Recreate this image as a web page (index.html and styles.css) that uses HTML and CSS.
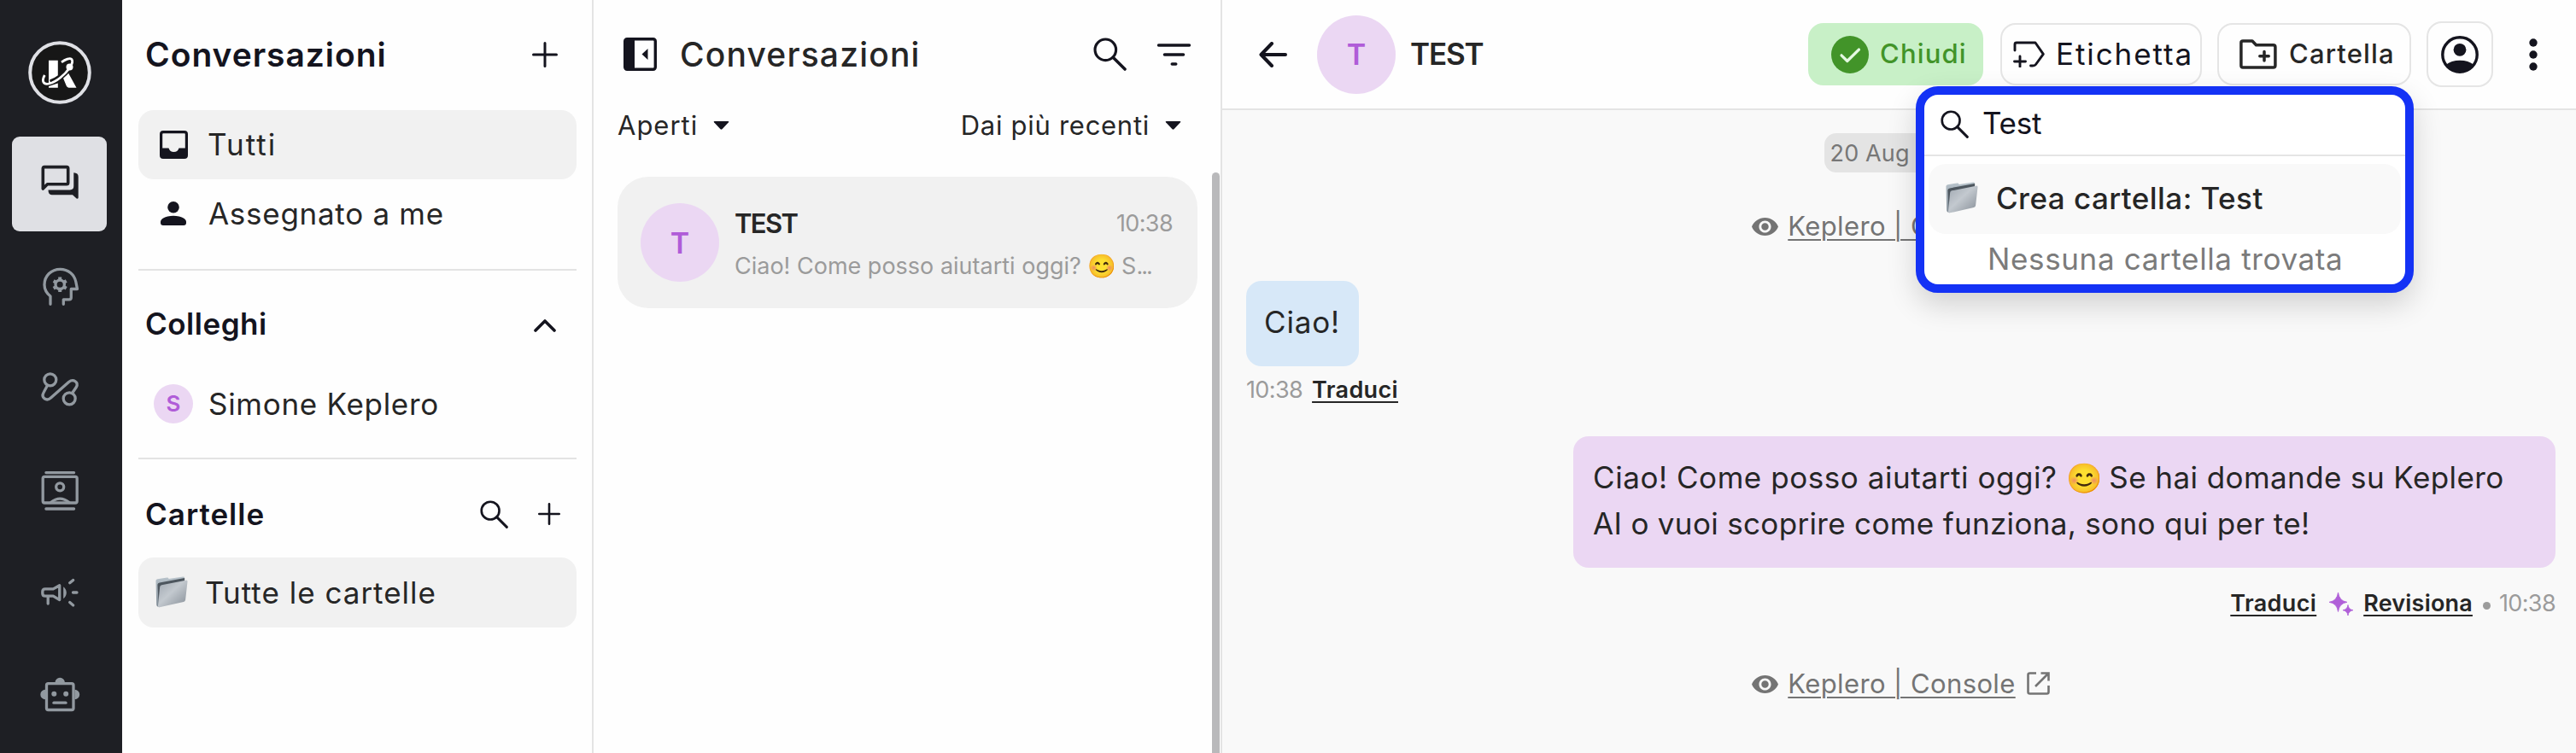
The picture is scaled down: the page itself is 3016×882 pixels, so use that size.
FILE: index.html
```html
<!DOCTYPE html>
<html lang="it">
<head>
<meta charset="utf-8">
<title>Keplero | Conversazioni</title>
<link rel="stylesheet" href="styles.css">
</head>
<body>
<svg width="0" height="0" class="defs" aria-hidden="true">
  <defs>
    <linearGradient id="front" x1="0" y1="0" x2="1" y2="1">
      <stop offset="0" stop-color="#9fa7b0"/><stop offset=".45" stop-color="#c3c9cf"/><stop offset="1" stop-color="#858d96"/>
    </linearGradient>
    <linearGradient id="back" x1="0" y1="0" x2="0" y2="1">
      <stop offset="0" stop-color="#b9c4cc"/><stop offset="1" stop-color="#7f8b95"/>
    </linearGradient>
  </defs>
  <symbol id="folder" viewBox="0 0 40 40">
    <path d="M1.500 6.500Q1.500 4.500 3.500 4.300L15 2.600Q16.500 2.500 17 4L34 1.500Q36 1.300 36 3V30L5 37.500Q2.500 38 2.300 35.500Z" fill="url(#back)"/>
    <path d="M3.500 11Q3.700 9 6 8.600L36 3V8L8 14L5 37Z" fill="#4d565e"/>
    <path d="M6.300 14Q6.500 12 8.500 11.600L37.500 5.800Q39.700 5.500 39.500 7.500L37 29.500Q36.700 31.300 34.800 31.900L6 38.300Q3.900 38.600 4.100 36.500Z" fill="url(#front)"/>
  </symbol>
  <symbol id="search" viewBox="0 0 40 40">
    <circle cx="14.700" cy="14.700" r="12.600" fill="none" stroke="currentColor" stroke-width="3.200"/>
    <path d="M23.800 23.800L38 38" stroke="currentColor" stroke-width="3.600" stroke-linecap="round"/>
  </symbol>
  <symbol id="plus" viewBox="0 0 30 30">
    <path d="M15 1.500V28.500M1.500 15H28.500" stroke="currentColor" stroke-width="3" stroke-linecap="round"/>
  </symbol>
  <symbol id="caret" viewBox="0 0 19 10"><path d="M1.500 0H17.500Q19 0 18 1.300L10.500 9.300Q9.500 10.200 8.500 9.300L1 1.300Q0 0 1.500 0Z" fill="currentColor"/></symbol>
  <symbol id="eye" viewBox="1 4 22 16"><path d="M12 4.500C7 4.500 2.700 7.600 1 12c1.700 4.400 6 7.500 11 7.500s9.300-3.100 11-7.500c-1.700-4.400-6-7.500-11-7.500zM12 17c-2.800 0-5-2.200-5-5s2.200-5 5-5 5 2.200 5 5-2.200 5-5 5zm0-8c-1.700 0-3 1.300-3 3s1.300 3 3 3 3-1.300 3-3-1.300-3-3-3z" fill="currentColor"/></symbol>
</svg>

<nav class="rail">
  <svg class="logo" viewBox="0 0 74 74">
    <circle cx="37" cy="37" r="34.800" fill="#171717" stroke="#dfe0e5" stroke-width="4"/>
    <path d="M24 22.700H34.800V42L24 51ZM24 53L34.800 49.500V54.700H24Z" fill="#fff"/>
    <path d="M41 43.500L47 37.500L56.500 54.800H47.500Q45.500 54.500 44.700 52.500Z" fill="#fff"/>
    <path d="M26 48.500C34 46 42 39.500 48 32" fill="none" stroke="#171717" stroke-width="6.500"/>
    <path d="M19.300 40C15.500 47 17.500 51.500 24.500 50C33 48 43 39.500 48.500 31.500C53.500 24 52.500 19 46 21.200Q42.500 22.300 39 24.800" fill="none" stroke="#fff" stroke-width="2.800"/>
    <circle cx="48.500" cy="30.500" r="4" fill="#fff"/>
  </svg>
  <a class="nav on"><svg viewBox="0 0 52 52">
    <path d="M8 5.600H34Q35.700 5.600 35.700 7.400V24Q35.700 25.800 34 25.800H11.500L6.300 31V7.400Q6.300 5.600 8 5.600Z" fill="none" stroke="currentColor" stroke-width="3.600" stroke-linejoin="round"/>
    <path d="M42.300 12.200Q47.700 12.500 47.700 17V41.500Q47.500 43.200 45.600 42.600L41 38.200H16.500Q12.500 38 12.500 32.400H38Q42.300 32.300 42.300 28Z" fill="currentColor"/></svg></a>
  <a class="nav"><svg viewBox="0 0 52 52" class="line">
    <path d="M15 47.300V38C10 34 8 29.500 8 24.500C8 14 16 6.300 26.500 6.300C36 6.300 43 12.500 44.800 21L46.500 29.500H39.300V39.500Q39.300 41.800 37 41.800H30.300V47.300"/>
    <circle cx="26.200" cy="24.300" r="5.200"/>
    <path stroke-width="4" stroke-linecap="butt" d="M26.200 18.500V15.600M26.200 30.100V33M21.200 21.400L18.700 20M31.200 21.400L33.700 20M21.200 27.200L18.700 28.700M31.200 27.200L33.700 28.700"/></svg></a>
  <a class="nav"><svg viewBox="0 0 52 52" class="line">
    <circle cx="14.800" cy="15.800" r="7"/><circle cx="37.200" cy="37.800" r="7"/>
    <path d="M11.500 22.500L7.200 30.500C3.500 37 10.500 41.500 15.500 37L36.500 18.500C42 14 48.500 19 45.300 24.500L40.500 31.500"/></svg></a>
  <a class="nav"><svg viewBox="0 0 52 52" class="line">
    <rect x="6.200" y="10.400" width="40" height="30.600" rx="2"/><path d="M9.900 5.600H42.600M9.900 48H42.600M15.500 40.500Q26.200 31.800 37 40.500"/><circle cx="26.200" cy="22.300" r="4.500"/></svg></a>
  <a class="nav"><svg viewBox="0 0 52 52" class="line">
    <path d="M9 21.900H18.300L25.700 17.800V34.600L18.300 30.200H9Q5.800 30.200 5.800 27V25Q5.800 21.900 9 21.900ZM12.200 31V39M37.700 14.800L41.700 11.500M41.500 26H46M37.700 37.600L41.700 40.900"/>
    <path d="M30.200 19.200Q33.800 22 33.800 26.200T30.200 33.200Z" fill="currentColor" stroke="none"/></svg></a>
  <a class="nav"><svg viewBox="0 0 52 52" class="line">
    <rect x="10.500" y="13.700" width="31.500" height="30.800" rx="2"/><path d="M19 36.200H33"/>
    <g fill="currentColor" stroke="none"><path d="M20.500 12.500A5.700 5.700 0 0 1 31.900 12.500ZM9 20.800A5.700 5.700 0 0 0 9 32.200ZM43.500 20.800A5.700 5.700 0 0 1 43.500 32.200Z"/><circle cx="19.300" cy="25.800" r="3"/><circle cx="33.200" cy="25.800" r="3"/></g></svg></a>
</nav>

<aside class="side">
  <header class="side-head">
    <h1 class="t40 semi navy ls-a">Conversazioni</h1>
    <svg class="plus-lg"><use href="#plus"/></svg>
  </header>
  <div class="row sel">
    <svg class="ico-inbox" viewBox="0 0 33 33"><rect x="1.600" y="1.600" width="29.800" height="29.800" rx="2.500" fill="none" stroke="currentColor" stroke-width="3.200"/><path d="M1.500 20.500H10.500Q12 25 16.500 25T22.500 20.500H31.500V30H1.500Z" fill="currentColor"/></svg>
    <span class="t36 ls-tutti">Tutti</span>
  </div>
  <div class="row me">
    <svg class="ico-me" viewBox="0 0 30 28"><circle cx="15" cy="6.800" r="6.800" fill="currentColor"/><path d="M0 25V24C0 19 9 16.700 15 16.700S30 19 30 24V25Q30 28 27 28H3Q0 28 0 25Z" fill="currentColor"/></svg>
    <span class="t36 ls-m">Assegnato a me</span>
  </div>
  <hr>
  <header class="sub-head first">
    <h2 class="t36 semi navy ls-s">Colleghi</h2>
    <svg class="chev" viewBox="0 0 26 15"><path d="M2 13L13 2L24 13" fill="none" stroke="currentColor" stroke-width="3.600" stroke-linecap="round" stroke-linejoin="round"/></svg>
  </header>
  <div class="row mate">
    <span class="avatar xs">S</span><span class="t36 ls-m">Simone Keplero</span>
  </div>
  <hr>
  <header class="sub-head second">
    <h2 class="t36 semi navy ls-l">Cartelle</h2>
    <span class="tools"><svg class="search-sm"><use href="#search"/></svg><svg class="plus-sm"><use href="#plus"/></svg></span>
  </header>
  <div class="row sel all">
    <svg class="folder"><use href="#folder"/></svg><span class="t36 ls-l">Tutte le cartelle</span>
  </div>
</aside>

<section class="list">
  <header class="list-head">
    <svg class="collapse" viewBox="0 0 39 39"><rect x="1.700" y="1.700" width="35.600" height="35.600" rx="2.500" fill="none" stroke="currentColor" stroke-width="3.400"/><path d="M1 2H13V37H1ZM28.500 13V26L21.500 19.500Z" fill="currentColor"/></svg>
    <h1 class="t40 med ls-b">Conversazioni</h1>
    <svg class="search-lg"><use href="#search"/></svg>
    <svg class="filter" viewBox="0 0 39 26"><path d="M1.700 2H37.300M8.500 13H30.500M17.300 24H21.700" stroke="currentColor" stroke-width="3.600" stroke-linecap="round"/></svg>
  </header>
  <div class="filters">
    <span class="drop"><span class="t32 ls-aperti">Aperti</span><svg class="caret"><use href="#caret"/></svg></span>
    <span class="drop"><span class="t32 ls-m">Dai più recenti</span><svg class="caret"><use href="#caret"/></svg></span>
  </div>
  <article class="card">
    <span class="avatar">T</span>
    <div class="card-body">
      <div class="card-top"><strong class="t32 semi ls-test">TEST</strong><time class="t28 faint ls-time">10:38</time></div>
      <p class="t28 faint preview">Ciao! Come posso aiutarti oggi? <span class="emoji em-s">😊</span> S<span class="dots3">...</span></p>
    </div>
  </article>
  <div class="scrollbar"></div>
</section>

<main class="chat">
  <header class="bar">
    <svg class="back" viewBox="0 0 33 30"><path d="M15 2L2.500 15L15 28M3 15H31" fill="none" stroke="currentColor" stroke-width="4" stroke-linecap="round" stroke-linejoin="round"/></svg>
    <span class="avatar">T</span>
    <h2 class="t36 semi ls-test2">TEST</h2>
    <button class="btn close"><svg viewBox="0 0 44 44"><circle cx="22" cy="22" r="22" fill="#429429"/><path d="M12 22.800L18.800 29.500L32.500 16" fill="none" stroke="#e4f8e2" stroke-width="3.200" stroke-linecap="round" stroke-linejoin="round"/></svg><span class="t32 btxt">Chiudi</span></button>
    <button class="btn tag"><svg viewBox="0 0 37 31"><path d="M2 11V4Q2 2 4 2H26L35.300 15.300L26.500 27.500Q25.500 29 23 29H20.500M8 18V30M1.500 24H14.500" fill="none" stroke="currentColor" stroke-width="2.900" stroke-linecap="round" stroke-linejoin="round"/></svg><span class="t36 navy ls-etichetta">Etichetta</span></button>
    <button class="btn dir"><svg viewBox="0 0 44 35"><path d="M4 2H15L19.500 6.700H39.500Q41.900 6.700 41.900 9V30.700Q41.900 33 39.500 33H4Q1.900 33 1.900 30.700V4Q1.900 2 4 2ZM29 14.500V25M23.800 19.800H34.200" fill="none" stroke="currentColor" stroke-width="3.500" stroke-linecap="round" stroke-linejoin="round"/></svg><span class="t32 btxt">Cartella</span></button>
    <button class="btn user"><svg viewBox="0 0 44 44"><circle cx="22" cy="22" r="20.200" fill="none" stroke="currentColor" stroke-width="3.400"/><circle cx="22" cy="16.300" r="7.400" fill="currentColor"/><path d="M5.500 34Q12 28.800 22 28.800T38.500 34Q33 42 22 42T5.500 34Z" fill="currentColor"/></svg></button>
    <svg class="more" viewBox="0 0 10 38"><circle cx="5" cy="5" r="4.700"/><circle cx="5" cy="19" r="4.700"/><circle cx="5" cy="33" r="4.700"/></svg>
  </header>

  <div class="thread">
    <div class="date t28">20 Aug 2025</div>
    <div class="visit top"><svg class="eye"><use href="#eye"/></svg><a class="t32 ls-k">Keplero | Console</a><svg class="ext" viewBox="0 0 27 27"><path d="M11 1.500H3.500Q1.500 1.500 1.500 3.500V23.500Q1.500 25.500 3.500 25.500H23.500Q25.500 25.500 25.500 23.500V16M16.500 1.500H25.500V10.500M25 2L10 17" fill="none" stroke="currentColor" stroke-width="2.600"/></svg></div>
    <div class="bubble in t36 ls-ciao">Ciao!</div>
    <div class="meta left"><time class="t28 faint ls-time">10:38</time><a class="t28 semi ls-tr">Traduci</a></div>
    <div class="bubble out t36"><span class="ls-o1">Ciao! Come posso aiutarti oggi? <span class="emoji em-l">😊</span> </span><span class="ls-o2">Se hai domande su Keplero</span><br><span class="ls-o3">AI o vuoi scoprire come funziona, sono qui per te!</span></div>
    <div class="meta right"><a class="t28 semi ls-tr">Traduci</a>
      <svg class="spark" viewBox="0 0 28 27"><path d="M10.500 0Q11.800 10 21 11.300Q11.800 12.600 10.500 22.500Q9.200 12.600 0 11.300Q9.200 10 10.500 0ZM22 14.500Q22.700 20 28 20.700Q22.700 21.500 22 27Q21.300 21.500 16 20.700Q21.300 20 22 14.500Z" fill="#b060d8" stroke="#b060d8" stroke-width=".8"/></svg>
      <a class="t28 semi ls-rev">Revisiona</a><i class="dot"></i><time class="t28 faint ls-time">10:38</time></div>
    <div class="visit"><svg class="eye"><use href="#eye"/></svg><a class="t32 ls-k">Keplero | Console</a><svg class="ext" viewBox="0 0 27 27"><path d="M11 1.500H3.500Q1.500 1.500 1.500 3.500V23.500Q1.500 25.500 3.500 25.500H23.500Q25.500 25.500 25.500 23.500V16M16.500 1.500H25.500V10.500M25 2L10 17" fill="none" stroke="currentColor" stroke-width="2.600"/></svg></div>
  </div>

  <div class="popup">
    <div class="field"><svg class="search-sm"><use href="#search"/></svg><span class="t36 navy ls-q">Test</span></div>
    <div class="option"><svg class="folder"><use href="#folder"/></svg><span class="t36 ls-crea">Crea cartella: Test</span></div>
    <p class="t36 none">Nessuna cartella trovata</p>
  </div>
</main>
</body>
</html>
```
FILE: styles.css
```css
*{box-sizing:border-box}
body{margin:0;width:3016px;height:882px;overflow:hidden;display:flex;background:#fefefe;color:#262626;font-family:Inter,"Noto Color Emoji",sans-serif}
h1,h2,p{margin:0;font-weight:400}
svg{display:block;flex:none;color:#14141e}
.defs{position:absolute}

/* type */
.t40{font-size:39px;line-height:48px}
.t36{font-size:35px;line-height:44px}
.t32{font-size:31px;line-height:40px}
.t28{font-size:27px;line-height:36px}
.semi{font-weight:600}
.med{font-weight:500}
.navy{color:#14141e}
.faint{color:#9b9b9b}
.ls-a{letter-spacing:.95px}
.ls-b{letter-spacing:1.17px}
.ls-tutti{letter-spacing:2px}
.ls-m{letter-spacing:.72px}
.ls-s{letter-spacing:.51px}
.ls-l{letter-spacing:1px}
.btxt{font-weight:550;letter-spacing:1.15px}
.ls-aperti{letter-spacing:1px}
.ls-test{letter-spacing:-1.6px}
.ls-test2{letter-spacing:-1.19px}
.ls-time{letter-spacing:-.62px}
.ls-etichetta{letter-spacing:1.9px}
.ls-k{letter-spacing:.39px}
.ls-ciao{letter-spacing:.83px}
.ls-tr{letter-spacing:.35px}
.ls-rev{letter-spacing:.19px}
.ls-q{letter-spacing:-.25px}
.ls-crea{font-weight:470;letter-spacing:.45px}
.ls-o1{letter-spacing:.56px}
.ls-o2{letter-spacing:.42px}
.ls-o3{letter-spacing:.33px}

/* rail */
.rail{flex:none;width:143px;background:#1e1f24;display:flex;flex-direction:column;padding:48px 0 0 14px;gap:8.5px;color:#9299a0}
.logo{width:74px;height:74px;margin:0 0 29.500px 19px}
.nav{width:111px;height:111px;flex:none;border-radius:9px;display:flex;align-items:center;justify-content:center;color:#9299a0}
.nav svg{width:52px;height:52px;color:inherit}
.nav.on{background:#dfe0e4;color:#1e1f24}
.line{fill:none;stroke:currentColor;stroke-width:3.300;stroke-linecap:round;stroke-linejoin:round}

/* folders column */
.side{flex:none;width:552px;border-right:2px solid #e4e4e4;padding:0 18px 0 19px}
.side-head{height:129px;padding:0 22px 2px 8px;display:flex;align-items:center;justify-content:space-between}
.plus-lg{width:30px;height:30px}
.row{height:82px;border-radius:18px;display:flex;align-items:center;padding-left:25px}
.sel{background:#f1f1f1}
.side .row{width:513px}
.ico-inbox{width:33px;height:33px;margin-right:23px}
.side-head + .row{height:81px;padding-bottom:1px}
.me{padding:0 0 2px 26px}
.ico-me{width:30px;height:28px;margin-right:26px}
hr{width:513px;height:2px;border:0;margin:0;background:#e3e3e3}
.me + hr{margin-top:23px}
.sub-head{display:flex;align-items:center;justify-content:space-between;padding:0 24px 0 8px}
.first{height:124px}
.chev{width:26px;height:15px;margin-top:4px}
.mate{height:64px;padding:0 0 1px 18px}
.xs.avatar{width:46px;height:46px;font-size:26px;font-weight:600;margin-right:18px}
.mate + hr{margin-top:31px}
.second{height:115px;padding:13px 19px 0 8px}
.tools{display:flex;align-items:center;gap:35px}
.search-sm{width:33px;height:33px}
.plus-sm{width:26px;height:26px}
.folder{width:39px;height:39px}
.all{padding:0 0 1px 19px}
.all .folder{margin-right:20px}

.avatar{flex:none;width:92px;height:92px;border-radius:50%;background:#ebd7f3;color:#b05cd8;display:flex;align-items:center;justify-content:center;font-size:34px;font-weight:600}

/* conversation list */
.list{flex:none;width:736px;border-right:2px solid #e4e4e4;position:relative;padding:0 0 0 28px}
.list-head{display:flex;align-items:center;height:127px;padding-left:7px}
.collapse{width:39px;height:39px}
.list-head h1{margin-left:27px;width:484px}
.search-lg{width:39px;height:39px;margin-right:36px}
.filter{width:39px;height:26px}
.filters{display:flex;justify-content:space-between;height:80px;padding:0 46px 0 0}
.drop{display:flex;height:40px;align-items:center;gap:18px}
.caret{width:19px;height:10px}
.card{width:679px;height:154px;border-radius:36px;background:#f1f1f1;display:flex;align-items:center;padding:0 29px 0 27px}
.card .avatar{margin-right:18px}
.card-body{flex:1;padding-top:8px}
.card-top{display:flex;justify-content:space-between;align-items:center;height:40px}
.preview{margin-top:8px;height:44px;line-height:44px;white-space:nowrap}
.dots3{letter-spacing:-2px}
.emoji{display:inline-block;letter-spacing:0;line-height:1;vertical-align:baseline}
.em-s{font-size:27px;width:32px}
.em-l{font-size:34px;width:40px}
.scrollbar{position:absolute;right:1px;top:202px;width:9px;height:690px;border-radius:5px;background:#b9b9bb}

/* chat */
.chat{flex:1;position:relative;background:#f9f9f9;display:flex;flex-direction:column}
.bar{height:129px;border-bottom:2px solid #e4e4e4;background:#fefefe;display:flex;align-items:center;padding-left:43px}
.bar h2,.btn span{position:relative;top:-1px}
.back{width:33px;height:30px}
.bar .avatar{margin-left:35px}
.bar h2{margin-left:17px;width:466px}
.btn{flex:none;height:73px;border:2px solid #e5e5e5;border-radius:18px;background:#fefefe;font-family:inherit;color:#262626;display:flex;align-items:center;padding:0}
.btn span{white-space:nowrap}
.close{width:205px;background:#c8f0c7;border-color:#c8f0c7;padding-left:25px;margin-right:20px}
.close svg{width:44px;height:44px;margin-right:13px}
.close span{color:#429429}
.tag{width:236px;padding-left:13px;margin-right:18px}
.tag svg{width:37px;height:31px;margin-right:13px}
.dir{width:227px;padding-left:24px;margin-right:18px}
.dir svg{width:44px;height:35px;margin-right:14px;color:#262626}
.user{width:78px;height:77px;padding-left:15px}
.user svg{width:44px;height:44px}
.more{width:10px;height:38px;margin-left:42px;fill:#14141e}

.thread{padding:27px 24px 0 28px;display:flex;flex-direction:column;align-items:flex-start}
.date{align-self:center;width:180px;height:46px;line-height:47px;border-radius:14px;background:#e4e4e4;color:#777;padding-left:7px;white-space:nowrap;letter-spacing:.16px}
.visit{align-self:center;display:flex;align-items:center;height:40px;color:#747474}
.visit svg{color:#747474}
.visit.top{margin-top:43px}
.eye{width:31px;height:23px;margin-right:11px}
.visit a{text-decoration:underline;text-underline-offset:4px;text-decoration-thickness:2px}
.ext{width:27px;height:27px;margin-left:13px;margin-top:-2px}
.bubble{border-radius:18px}
.in{margin-top:44px;width:132px;height:100px;line-height:96px;background:#d7e8f8;padding-left:21px}
.meta{display:flex;align-items:center;height:36px}
.meta a{text-decoration:underline;text-underline-offset:4px;text-decoration-thickness:2px}
.left{margin-top:10px;gap:10px}
.left .ls-time{margin-right:1px}
.out{align-self:flex-end;margin-top:36px;width:1150px;height:154px;background:#ebd7f3;padding:21px 0 0 23px;line-height:54px;white-space:nowrap}
.right{align-self:flex-end;margin-top:24px}
.spark{width:28px;height:27px;margin:0 12px 0 15px}
.dot{width:9px;height:9px;border-radius:50%;background:#9b9b9b;margin:4px 10px 0 12px}
.right + .visit{margin-top:56px}

/* folder picker */
.popup{position:absolute;left:812px;top:101px;width:583px;height:242px;border:10px solid #1432f5;border-radius:26px;background:#fff;box-shadow:0 14px 34px rgba(0,0,0,.16)}
.field{height:72px;border-bottom:2px solid #e5e5e5;display:flex;align-items:center;padding:0 0 4px 19px;gap:16px}
.field .search-sm{margin-top:2px}
.option{margin:9px 5px 0;height:82px;border-radius:20px;background:#f9f9f9;display:flex;align-items:center;padding:0 0 3px 19px;gap:21px}
.none{color:#7b7b7b;letter-spacing:.64px;padding-left:74px;margin-top:7px;white-space:nowrap}
```
